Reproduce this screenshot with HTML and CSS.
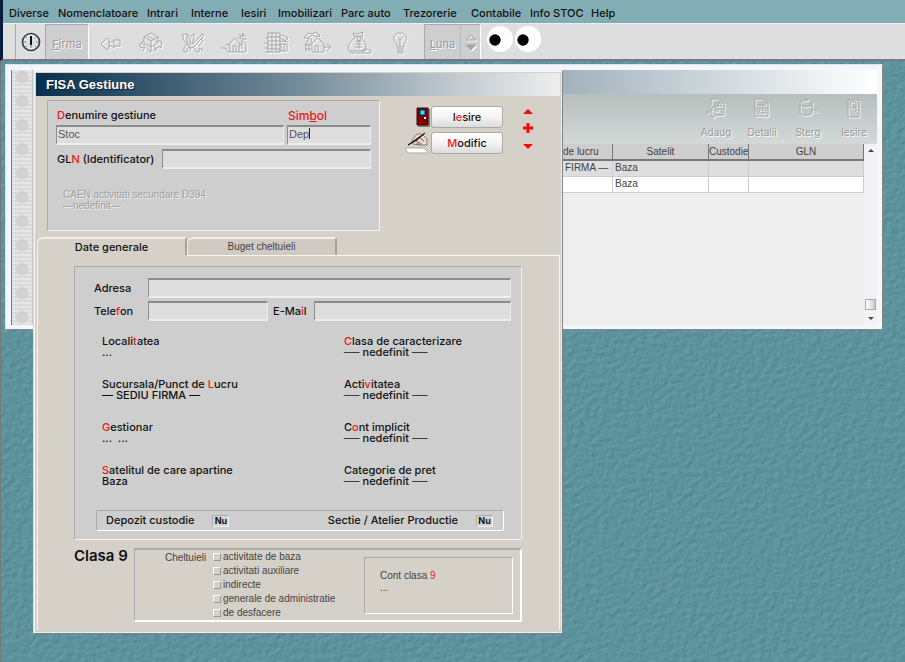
FILE: index.html
```html
<!DOCTYPE html>
<html lang="ro">
<head>
<meta charset="utf-8">
<title>FISA Gestiune</title>
<link rel="stylesheet" href="styles.css">
</head>
<body>
<header class="top">
  <nav class="menu">
    <a href="#">Diverse</a><a href="#">Nomenclatoare</a><a href="#">Intrari</a><a href="#">Interne</a><a href="#">Iesiri</a><a href="#">Imobilizari</a><a href="#">Parc auto</a><a href="#">Trezorerie</a><a href="#">Contabile</a><a href="#">Info STOC</a><a href="#">Help</a>
  </nav>
  <div class="toolbar">
    <button class="tool clock" aria-label="Ceas"><svg width="20" height="20" viewBox="0 0 20 20" fill="none" stroke="#222"><circle cx="10" cy="10" r="8.5" stroke="#31424c" stroke-width="1.7"/><circle cx="10" cy="10" r="6.5" stroke="#eef6ff"/><path d="M10 4v9" stroke="#111" stroke-width="2"/><path d="M10 13v3M3 10h2M15 10h2M5 5l1 1M15 5l-1 1M5 15l1-1M15 15l-1-1" stroke="#6c7c85"/></svg></button>
    <button class="tool firma"><u>F</u>irma</button>
    <div class="tools">
      <button class="tool" aria-label="Inapoi"><svg class="emboss" width="26" height="26" viewBox="0 0 26 26"><path d="M4 14l6-6 2 1v3h4l1-2h6v6h-5l-1 2-2-2h-3v3l-2 1zM12 12v4M17 11v5"/></svg></button>
      <button class="tool" aria-label="Stoc"><svg class="emboss" width="26" height="26" viewBox="0 0 26 26"><path d="M6 7l7-4 7 4-7 4zM6 7v6l7 4 7-4V7M13 11v6M6 10l-3 3 4 3M20 10l4 2-1 6-3-2M2 17l4 1M7 17l-2 4M13 17v5l-4-3M16 16l3 5M20 17l-5 4M2 13v4M9 6l6 3M17 11l3 1"/></svg></button>
      <button class="tool" aria-label="Operatii"><svg class="emboss" width="26" height="26" viewBox="0 0 26 26"><path d="M3 4h4l3 4v4l3 2 9-10 2 1-10 12-3 1-4-4M3 4v5l4 5-3 4v4h3v-3l3-3M7 4v8l4 3M11 6l3-2v6l-2 3M14 18l2 4h3v-4l3 1v3M10 16v5M21 9l2 2-4 5"/></svg></button>
      <button class="tool" aria-label="Imobilizari"><svg class="emboss" width="28" height="26" viewBox="0 0 28 26"><path d="M1 18h4l3 4h17M8 15l7-7 6 7h-2v7M10 14v8M13 22v-6h3v6M20 8l3-4 2 2M19 4l2 2M23 3v6h4M22 9v10M24 11l2 5v6M6 14l3 2M18 7l3 2"/></svg></button>
      <button class="tool" aria-label="Balanta"><svg class="emboss" width="28" height="26" viewBox="0 0 28 26"><path d="M6 3h12v19H6zM6 7h12M6 11h12M6 15h12M6 19h12M10 3v19M14 3v19M3 8h3M2 13h5M3 18h4M3 22h5M16 7l5-2 5 3-3 3-5-3M18 11l8 1M17 14h8v7h-9M19 14v7M22 14v7"/></svg></button>
      <button class="tool" aria-label="Iesiri"><svg class="emboss" width="30" height="26" viewBox="0 0 30 26"><path d="M2 8l4-5 4 1 4-2 4 4-4 1-4-2-4 3zM7 7l-2 6M9 8v5M3 15h7M3 19h6M4 13v9M7 13v9M10 21V13l6-5 6 6v8H10M13 22v-6h3v6M22 17h6M25 14l4 3-4 4"/></svg></button>
      <button class="tool" aria-label="Trezorerie"><svg class="emboss" width="28" height="26" viewBox="0 0 28 26"><path d="M8 3l4 1 6-2-1 4H9zM9 7h9M10 8c-5 3-8 9-6 13h16c3-5 0-10-4-13M17 21c3-3 6-2 9 0v2H5M11 11h6M11 14h6M10 17h7M12 8l2 4 2-4M14 10v9"/></svg></button>
      <button class="tool" aria-label="Info"><svg class="emboss" width="20" height="26" viewBox="0 0 20 26"><path d="M7 17v-3C2 10 3 3 10 3s9 7 4 11v3zM7 19h7M8 21h5v2H8zM10 17v-7l-2-2M10 10l3-3"/></svg></button>
    </div>
    <button class="tool luna"><u>L</u>una</button>
    <button class="tool spin" aria-label="Luna urmatoare"><svg class="emboss" width="12" height="20" viewBox="0 0 12 20"><path d="M1 7l5-5 5 5z"/><path d="M1 12h10l-5 5z" fill="#aaa"/></svg></button>
    <svg class="eyes" width="55" height="28" viewBox="0 0 55 28" aria-hidden="true"><circle cx="14" cy="13" r="13" fill="#fff"/><circle cx="42" cy="13" r="13" fill="#fff"/><circle cx="9" cy="14" r="5.7"/><circle cx="37" cy="14" r="5.7"/></svg>
  </div>
</header>

<main class="desktop">
  <svg class="texture" width="100%" height="100%" aria-hidden="true">
    <filter id="weave" x="0" y="0" width="100%" height="100%" color-interpolation-filters="sRGB">
      <feTurbulence type="fractalNoise" baseFrequency="0.16 0.2" numOctaves="2" seed="4"/>
      <feDiffuseLighting lighting-color="#5f959f" surfaceScale="0.35" diffuseConstant="1.25"><feDistantLight azimuth="225" elevation="52"/></feDiffuseLighting>
    </filter>
    <rect width="100%" height="100%" filter="url(#weave)"/>
  </svg>

  <section class="window list">
    <div class="binding"></div>
    <div class="list-main">
      <div class="list-title"></div>
      <div class="list-tools">
        <button class="action"><svg class="emboss" width="22" height="22" viewBox="0 0 22 22"><path d="M6 9V2h9l4 4v12h-8M15 2v4h4M2 14h5v-4h3v4h4M2 14v2h5v4h3v-3M8 9h9M13 6v4M10 12h7v4"/></svg><span>Adaug</span></button>
        <button class="action"><svg class="emboss" width="22" height="22" viewBox="0 0 22 22"><path d="M4 2h9l4 4v13H4zM13 2v4h4M6 8h9M6 11h3v3H6zM10 10h2v4M13 11h2v3M6 16h9"/></svg><span>Detalii</span></button>
        <button class="action"><svg class="emboss" width="22" height="22" viewBox="0 0 22 22"><path d="M3 6c0-5 12-5 12 0s-12 5-12 0v10c2 3 10 3 12 0V6M5 4h4l3-2M15 13h5M17 15h4"/></svg><span>Sterg</span></button>
        <button class="action"><svg class="emboss" width="22" height="22" viewBox="0 0 22 22"><path d="M5 3h11v17H5zM7 5h6v6H7zM13 12v2"/></svg><span>Iesire</span></button>
      </div>
      <div class="list-body">
        <table>
          <colgroup><col><col class="c-lucru"><col class="c-satelit"><col class="c-custodie"><col class="c-gln"></colgroup>
          <thead><tr><th></th><th class="left">de lucru</th><th>Satelit</th><th class="left">Custodie</th><th>GLN</th></tr></thead>
          <tbody>
            <tr class="selected"><td></td><td>FIRMA —</td><td>Baza</td><td></td><td></td></tr>
            <tr><td></td><td></td><td>Baza</td><td></td><td></td></tr>
          </tbody>
        </table>
        <div class="scroll"><i class="up"></i><i class="thumb"></i><i class="down"></i></div>
      </div>
    </div>
  </section>

  <section class="window dialog">
    <h1>FISA Gestiune</h1>
    <div class="head">
      <div class="panel ident">
        <div class="ident-grid">
          <label for="den"><b>D</b>enumire gestiune</label>
          <label for="sim" class="all-red">Sim<u>b</u>ol</label>
          <input id="den" value="Stoc">
          <div class="field caret"><input id="sim" value="Dep" size="3"></div>
        </div>
        <div class="gln"><label for="gln">GL<b>N</b> (Identificator)</label><input id="gln"></div>
        <p class="disabled">CAEN activitati secundare D394<br>—nedefinit—</p>
      </div>
      <div class="commands">
        <div class="cmd">
          <svg width="14" height="20" viewBox="0 0 14 20"><path d="M2 2h12v18H2z" fill="#867e7c"/><path d="M1 1h11v17H1z" fill="#800000" stroke="#340808"/><path d="M4 3h5v5H4z" fill="#0ff" stroke="#126"/><path d="M8 10h2v2H8z" fill="#fff"/></svg>
          <button class="push">I<b>e</b>sire</button>
        </div>
        <div class="cmd">
          <svg width="26" height="22" viewBox="0 0 26 22"><path d="M1 16h19l5 5H4z" fill="#fff" stroke="#aaa"/><path d="M8 8l5-6 5 0 5 5 0 6h-7l-7-1z" fill="#edd8cc" stroke="#8c7c74"/><path d="M4 13L21 1l-8 7z" fill="#222" stroke="#111"/><path d="M12 9l4 2M16 6l4 3M12 12h6" stroke="#76665e" fill="none"/></svg>
          <button class="push"><b>M</b>odific</button>
        </div>
      </div>
      <svg class="arrows" width="10" height="44" viewBox="0 0 10 44" fill="#ee0f0a"><path d="M5 1l5 5H0z"/><path d="M3.500 15h3v3.500H10v3H6.500V25h-3v-3.500H0v-3h3.500z"/><path d="M0 36h10l-5 5z"/></svg>
    </div>

    <div class="tabs" role="tablist">
      <button class="tab active" role="tab">Date generale</button>
      <button class="tab" role="tab">Buget cheltuieli</button>
    </div>

    <div class="page">
      <div class="panel general">
        <div class="contact">
          <label for="adr">Adresa</label><input id="adr" class="wide">
          <label for="tel">Tele<b>f</b>on</label><input id="tel"><label for="mail">E-Ma<b>i</b>l</label><input id="mail">
        </div>
        <dl class="facts">
          <div><dt>Locali<b>t</b>atea</dt><dd>...</dd></div>
          <div><dt><b>C</b>lasa de caracterizare</dt><dd>── nedefinit ──</dd></div>
          <div><dt>Sucursala/Punct de <b>L</b>ucru</dt><dd>— SEDIU FIRMA —</dd></div>
          <div><dt>Acti<b>v</b>itatea</dt><dd>── nedefinit ──</dd></div>
          <div><dt><b>G</b>estionar</dt><dd>...&nbsp; ...</dd></div>
          <div><dt>C<b>o</b>nt implicit</dt><dd>── nedefinit ──</dd></div>
          <div><dt><b>S</b>atelitul de care apartine</dt><dd>Baza</dd></div>
          <div><dt>Categorie de pret</dt><dd>── nedefinit ──</dd></div>
        </dl>
        <div class="flags">
          <span>Depozit custodie</span><button class="nu">Nu</button>
          <span class="push-right">Sectie / Atelier Productie</span><button class="nu">Nu</button>
        </div>
      </div>
      <div class="clasa">
        <h2>Clasa 9</h2>
        <div class="clasa-box">
          <span class="chel">Cheltuieli</span>
          <div class="checks">
            <label><input type="checkbox">activitate de baza</label>
            <label><input type="checkbox">activitati auxiliare</label>
            <label><input type="checkbox">indirecte</label>
            <label><input type="checkbox">generale de administratie</label>
            <label><input type="checkbox">de desfacere</label>
          </div>
          <div class="cont">Cont clasa <b>9</b><br>...</div>
        </div>
      </div>
    </div>
  </section>
</main>
</body>
</html>
```

FILE: styles.css
```css
* { box-sizing: border-box; }

body {
  margin: 0;
  min-height: 100vh;
  display: flex;
  flex-direction: column;
  font: 11px/11px Inter, "Liberation Sans", sans-serif;
  color: #111;
  background: #5d929c;
}

button, input {
  font: inherit;
  color: inherit;
  margin: 0;
  padding: 0;
  border: 0;
  background: none;
  border-radius: 0;
}

b { color: #f01818; font-weight: inherit; }
svg { display: block; flex: none; }

/* Menu and toolbar */
.top { border-left: 3px solid #0a1c40; border-bottom: 2px solid #747c7e; }

.menu {
  display: grid;
  grid-template-columns: 49px 89px 44px 50px 37px 63px 62px 68px 59px 61px auto;
  height: 23px;
  padding: 8px 0 0 6px;
  background: #83adb4;
  font-weight: 500;
}
.menu a { color: #111; text-decoration: none; white-space: nowrap; }

.toolbar {
  display: flex;
  height: 36px;
  padding-left: 12px;
  border-top: 1px solid #eee;
  background: #dedede;
}
.tool { display: flex; align-items: center; justify-content: center; }
.clock { width: 30px; border-left: 1px solid #aaa; }
.firma, .luna, .spin {
  background: #cecece;
  color: #999;
  text-shadow: 1px 1px 0 #fff;
  border: 1px solid #aaa;
  border-width: 1px 0 0 1px;
  padding-top: 4px;
}
.spin { padding-top: 2px; }
.firma { width: 44px; border-right: 1px solid #fff; }
.tools { display: grid; grid-template-columns: repeat(8, 1fr); width: 335px; padding: 3px 3px 0 0; }
.luna { width: 36px; }
.spin { width: 21px; border-left-color: #bbb; border-right: 1px solid #fff; }
.eyes { margin: 2px 0 0 5px; }

.emboss {
  fill: none;
  stroke: #a6a6a6;
  filter: drop-shadow(1px 1px 0 #fff);
}

/* Desktop */
.desktop {
  position: relative;
  flex: 1;
  min-height: 601px;
  border-left: 1px solid #777;
  overflow: hidden;
}
.texture { position: absolute; inset: 0; }
.window { position: absolute; }

/* List window */
.list {
  left: 4px;
  right: 22px;
  top: 3px;
  display: flex;
  padding: 5px 5px 4px;
  background: #f3f6fc;
  border: 1px solid #888;
  border-top-color: #dde4e8;
  border-left-color: #dde4e8;
}
.binding {
  width: 23px;
  border-left: 1px solid #777;
  border-right: 2px solid #c3c8c8;
  background:
    radial-gradient(circle at 10px 7px, #d2d2d2 6px, transparent 7px) 0 0 / 23px 24px,
    repeating-linear-gradient(#e6e6e6 0 2px, #dadada 2px 4px);
}
.list-main { flex: 1; min-width: 0; }
.list-title { height: 24px; background: linear-gradient(90deg, #0a3050, #a0b0bc 62%, #fff); }
.list-tools {
  display: flex;
  justify-content: flex-end;
  height: 50px;
  padding-top: 3px;
  background: linear-gradient(#b6bfbd, #d3d9d8);
}
.action {
  display: flex;
  flex-direction: column;
  align-items: center;
  gap: 8px;
  width: 46px;
  height: 42px;
  font-size: 10px;
  color: #999;
  text-shadow: 1px 1px 0 #fff;
}
.list-body { display: flex; height: 181px; background: #eee; }
table {
  flex: 1;
  width: 100%;
  min-width: 0;
  align-self: flex-start;
  border-collapse: collapse;
  table-layout: fixed;
  font: 10px/12px "Liberation Sans", sans-serif;
  color: #444;
}
.c-lucru { width: 50px; }
.c-satelit { width: 96px; }
.c-custodie { width: 40px; }
.c-gln { width: 115px; }
th, td { height: 16px; padding: 0 2px; white-space: nowrap; overflow: hidden; }
th {
  background: #cecece;
  font-weight: 400;
  border-right: 1px solid #777;
  border-bottom: 2px solid #777;
  padding: 0 1px;
}
th.left { text-align: left; padding: 0; }
td { background: #fff; border-right: 1px solid #ccc; border-bottom: 1px solid #ccc; }
.selected td { background: #dedede; }
.scroll {
  display: flex;
  flex: none;
  flex-direction: column;
  align-items: center;
  width: 13px;
  background: #f2f2f2;
  padding: 5px 0;
}
.scroll i { display: block; }
.up, .down { border: 3px solid transparent; }
.up { border-bottom-color: #444; border-top: 0; }
.down { border-top-color: #444; border-bottom: 0; margin-top: 7px; }
.thumb {
  width: 11px;
  height: 11px;
  margin-top: auto;
  border: 1px solid #aaa;
  background: linear-gradient(90deg, #fff, #ccc);
}

/* Dialog */
.dialog {
  left: 32px;
  right: 342px;
  top: 9px;
  background: #d5d0c8;
  border: 1px solid #7d8488;
  border-top-color: #eee;
  border-left-color: #ddd;
  box-shadow: inset 1px 1px 0 #f6f6f4, inset -1px -1px 0 #eee;
  padding: 2px;
}
h1 {
  margin: 0;
  padding: 0 10px;
  font: 700 13px/23px "Liberation Sans", sans-serif;
  color: #fff;
  text-shadow: 1px 1px 0 #123;
  background: linear-gradient(90deg, #08304f, #748b99 50%, #c2cad0 80%, #eee);
}
.head { display: flex; align-items: flex-start; padding: 4px 0 0 11px; }
.panel {
  background: #cecece;
  border: 1px solid #aaa;
  border-right-color: #f4f4f4;
  border-bottom-color: #f4f4f4;
}
.dialog input:not([type]) {
  display: block;
  height: 20px;
  width: 100%;
  min-width: 0;
  padding: 0 1px 3px;
  border: 1px solid #8c8c8c;
  border-top-width: 2px;
  border-right: 1px solid #eee;
  border-bottom: 2px solid #eee;
  background: #dedede;
  font: 11px/13px "Liberation Sans", sans-serif;
  color: #555;
}
.ident { width: 333px; height: 131px; padding: 8px 8px 0; font-weight: 500; }
.ident-grid { display: grid; grid-template-columns: 1fr 84px; column-gap: 3px; row-gap: 3px; }
.ident-grid label { line-height: 13px; padding-left: 1px; }
.ident-grid label.all-red { color: #f01818; padding-top: 1px; line-height: 12px; font-size: 12px; }
.caret { position: relative; }
.caret::after { content: ""; position: absolute; left: 22px; top: 3px; width: 1px; height: 11px; background: #222; }
.gln { display: flex; align-items: center; gap: 8px; margin-top: 4px; }
.gln label { flex: none; padding-left: 1px; }
.disabled {
  margin: 20px 0 0 7px;
  font: 10px/11px "Liberation Sans", sans-serif;
  color: #a0a0a0;
  text-shadow: 1px 1px 0 #eee;
}
.commands { display: flex; flex-direction: column; align-items: flex-end; gap: 4px; margin: 6px 0 0 auto; }
.cmd { display: flex; align-items: center; gap: 1px; }
.push {
  width: 72px;
  height: 22px;
  border: 1px solid #aaa;
  border-radius: 3px;
  background: linear-gradient(#fff, #f4f4f4 50%, #dcdcdc);
  font-weight: 500;
}
.arrows { margin: 8px 27px 0 20px; }

.tabs { display: flex; margin-top: 6px; padding-left: 1px; }
.tab {
  width: 150px;
  height: 18px;
  border: 1px solid #f0eeea;
  border-top-width: 2px;
  border-right: 2px solid #a8a290;
  border-bottom: 0;
  border-radius: 6px 3px 0 0;
  background: #d0cac2;
  font: 10px/14px "Liberation Sans", sans-serif;
  color: #444;
}
.tab.active { background: #d5d0c8; font: 500 11px/14px Inter, sans-serif; color: #111; }
.page {
  margin: 0 0 1px 1px;
  padding: 11px 37px 8px 36px;
  border-right: 1px solid #f4f4f4;
  border-left: 1px solid #f4f4f4;
  position: relative;
}
.page::before { content: ""; position: absolute; left: 149px; right: 0; top: 0; height: 1px; background: #f6f6f4; }

.general { height: 274px; padding: 11px 10px 0 19px; font-weight: 500; display: flex; flex-direction: column; }
.contact {
  display: grid;
  grid-template-columns: 54px 120px 46px 1fr;
  row-gap: 3px;
  align-items: center;
}
.contact .wide { grid-column: 2 / -1; }
.contact label[for="mail"] { padding-left: 5px; }
.facts {
  display: grid;
  grid-template-columns: 242px 1fr;
  row-gap: 21px;
  margin: 15px 0 0 8px;
}
.facts dt, .facts dd { margin: 0; line-height: 11px; white-space: nowrap; }
.flags {
  display: flex;
  align-items: center;
  height: 21px;
  margin: auto 7px 8px 2px;
  padding: 0 10px 0 9px;
  border: 1px solid #aaa;
  border-right-color: #fff;
  border-bottom-color: #fff;
}
.push-right { margin-left: auto; }
.nu {
  width: 17px;
  height: 12px;
  margin-left: 18px;
  border: 1px solid #aaa;
  border-right-color: #eee;
  border-bottom-color: #eee;
  background: #d6d6d6;
  font: 700 9px/9px Inter, sans-serif;
}

.clasa { display: flex; align-items: flex-start; margin-top: 8px; }
h2 { margin: 0; width: 60px; flex: none; white-space: nowrap; font: 600 15px/15px Inter, sans-serif; }
.clasa-box {
  flex: 1;
  display: flex;
  align-items: flex-start;
  height: 74px;
  padding: 0 7px 0 30px;
  border: 2px solid #aaa;
  border-width: 2px 2px 2px 1px;
  border-right-color: #fff;
  border-bottom-color: #fff;
  font: 10px/14px "Liberation Sans", sans-serif;
  color: #444;
}
.chel { width: 48px; padding-top: 1px; }
.checks { display: flex; flex-direction: column; flex: 1; }
.checks label { display: flex; align-items: center; gap: 2px; height: 14px; white-space: nowrap; }
.checks input {
  appearance: none;
  width: 8px;
  height: 8px;
  border: 1px solid #999;
  border-top-color: #fff;
  border-left-color: #fff;
}
.cont {
  width: 149px;
  height: 57px;
  margin-top: 7px;
  padding: 12px 15px;
  line-height: 12px;
  border: 1px solid #aaa;
  border-right-color: #fff;
  border-bottom-color: #fff;
}
```
